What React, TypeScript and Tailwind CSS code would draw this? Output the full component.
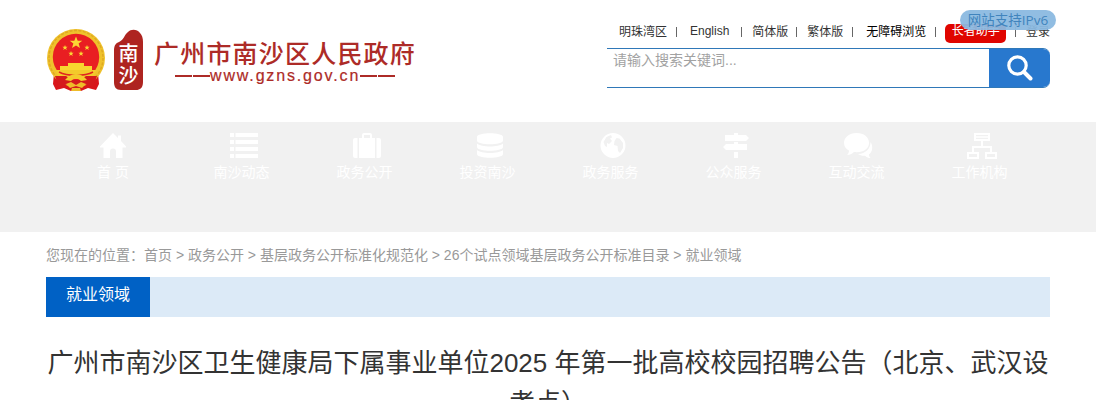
import type { ReactNode } from "react";

const icons: Record<string, ReactNode> = {
  home: (
    <path d="M0 14.500 13 1l5 5V3.500h3V9l5 5.500v1h-3.500V26H16v-6.500a3 3 0 0 0-6 0V26H3.500V15.500H0z" />
  ),
  list: (
    <path d="M0 1h4v4H0zM5.500 1H28v4H5.500zM0 8h4v4H0zM5.500 8H28v4H5.500zM0 15h4v4H0zM5.500 15H28v4H5.500zM0 22h4v4H0zM5.500 22H28v4H5.500z" />
  ),
  suitcase: (
    <path fillRule="evenodd" d="M0 8a2 2 0 0 1 2-2h2.500v20H2a2 2 0 0 1-2-2zM6 6h3V3a2 2 0 0 1 2-2h6a2 2 0 0 1 2 2v3h3v20H6zm5 0h6V3h-6zM23.500 6H26a2 2 0 0 1 2 2v16a2 2 0 0 1-2 2h-2.500z" />
  ),
  database: (
    <path d="M0 5c0-5 26-5 26 0v3.500c0 5-26 5-26 0zM0 11.500c4 4 22 4 26 0V15c0 5-26 5-26 0zM0 18c4 4 22 4 26 0v4c0 5-26 5-26 0z" />
  ),
  globe: (
    <path fillRule="evenodd" d="M13 1a12.500 12.500 0 1 0 0 25 12.500 12.500 0 0 0 0-25zM3.500 10l3-5 4.500-2 1 2.500-2 1 2 2.500-3 3-2-1v4l-2-1zM14.500 9l2-3 3 .5 3.500 4.500v5l-3 5-2-2-.5-5-3.500-1z" />
  ),
  signs: (
    <path d="M2 3h9V1h4v2h8l3 3-3 3H2zM3 12h8v-2h4v2h9v6H3l-3-3zM11 20h4v6h-4z" />
  ),
  comments: (
    <path d="M12.500 1C5 1 0 5.500 0 11c0 3.500 2 6 5 7.500 0 2-1 3.500-2 4.500 3 0 5-1 7-3 9 1 15-3 15-9S20 1 12.500 1zM26.500 10c0 7-5 11.500-12.500 12 2 1.500 5 2 7 1.700 1.500 1.500 3.500 2.300 5.500 2.300-1-1-1.500-2-1.500-3.500 4-3 4-9 1.500-12.500z" />
  ),
  sitemap: (
    <path fillRule="evenodd" d="M7 1h16v8h-7v5h9v6h5v7H18v-7h5v-4H7v4h5v7H0v-7h5v-6h9V9H7zM9 3v1.200h12V3zm0 2.800V7h12V5.800zM2 22v3h8v-3zm18 0v3h8v-3z" />
  ),
};

const nav = [
  { icon: "home", label: "首 页", size: 26, nudge: "pl-0" },
  { icon: "list", label: "南沙动态", size: 28, nudge: "pl-1" },
  { icon: "suitcase", label: "政务公开", size: 28, nudge: "pl-1" },
  { icon: "database", label: "投资南沙", size: 26, nudge: "pl-1" },
  { icon: "globe", label: "政务服务", size: 26, nudge: "pl-1" },
  { icon: "signs", label: "公众服务", size: 26, nudge: "pl-1" },
  { icon: "comments", label: "互动交流", size: 29, nudge: "pl-1" },
  { icon: "sitemap", label: "工作机构", size: 30, nudge: "pl-1" },
];

function Emblem() {
  return (
    <svg width="60" height="64" viewBox="0 0 60 64" className="shrink-0">
      <path d="M8 44h44l1 11-3 6-8-2-7 3H25l-7-3-8 2-3-6z" fill="#d9161b" />
      <ellipse cx="30" cy="29" rx="29" ry="29" fill="#efc22c" />
      <ellipse cx="30" cy="29" rx="27" ry="27.500" fill="none" stroke="#dfa922" strokeWidth="1.500" strokeDasharray="3 1.500" />
      <circle cx="30" cy="28" r="23.200" fill="#e91e22" />
      <path d="m30 7.500 1.700 4.200h4.600l-3.700 2.900 1.400 4.500-4-2.700-4 2.700 1.400-4.500-3.700-2.900h4.600z" fill="#fbd834" />
      <path d="m19 16 .7 1.800h1.900L20.100 19l.6 1.900-1.700-1.100-1.700 1.100.6-1.900-1.500-1.200h1.900zM41 16l.7 1.800h1.900L42.100 19l.6 1.900-1.700-1.100-1.700 1.100.6-1.900-1.500-1.200h1.900zM25 22l.7 1.800h1.900L26.100 25l.6 1.900-1.700-1.100-1.700 1.100.6-1.900-1.500-1.200h1.900zM35 22l.7 1.800h1.900L36.100 25l.6 1.900-1.700-1.100-1.700 1.100.6-1.900-1.500-1.200h1.900z" fill="#fbd834" />
      <path d="M22 34h16v3h8v4H14v-4h8z" fill="#f8d62f" />
      <path d="M9 41h42l-5 9H14z" fill="#f3ca2b" />
      <path d="M13 43c8 4.500 26 4.500 34 0" fill="none" stroke="#e02420" strokeWidth="1.500" />
      <path d="M9 47h11l6 4h8l6-4h11l-4 11-9-3-5 4h-6l-5-4-9 3z" fill="#d51a1c" />
      <path d="M19 51c3-4 7-6 11-6s8 2 11 6l-6 1c-3-3-7-3-10 0z" fill="#f4ca2b" />
      <path d="M20 55l5-2 5 3 5-3 5 2-4 4-6-2-6 2zM26 59h8l1 3H25z" fill="#eebc2a" />
    </svg>
  );
}

function Seal() {
  return (
    <svg width="30" height="62" viewBox="0 0 30 62" className="ml-2 shrink-0">
      <path d="M0 22c0-6 2-8 5-9 5-2 5-7 9-10 3-3 9-3 12 1 2 2 3 5 3 9v40c0 6-3 8-7 8H7c-5 0-7-3-7-8z" fill="#ae2420" />
      <g fill="#fff" fontFamily="Noto Sans CJK SC, sans-serif" fontSize="20" fontWeight="500" textAnchor="middle">
        <text x="14.500" y="32">南</text>
        <text x="14.500" y="54">沙</text>
      </g>
    </svg>
  );
}

function Divider({ className }: { className: string }) {
  return <span className={`h-2.5 w-px bg-[#666] ${className}`} />;
}

function Dashes() {
  return (
    <span className="flex gap-[1px]">
      <i className="h-[2px] w-[17px] bg-[#ad2b27]" />
      <i className="h-[2px] w-[17px] bg-[#ad2b27]" />
    </span>
  );
}

export default function App() {
  return (
    <div className="h-[400px] w-[1096px] overflow-hidden bg-white font-['Liberation_Sans','Noto_Sans_CJK_SC',sans-serif] text-[#333]">
      <header className="flex h-[122px] justify-between pr-[46px] pl-[46px]">
        <div className="flex pt-[29px]">
          <Emblem />
          <Seal />
          <div className="ml-[10px] flex flex-col whitespace-nowrap text-[#ad2b27]">
            <div className="mt-[8px] h-[34px] text-[25px] leading-[34px] font-medium tracking-[1.2px]">广州市南沙区人民政府</div>
            <div className="-mt-[5px] ml-[21px] flex h-[20px] items-center text-[16px] leading-5 tracking-[1.85px] [-webkit-text-stroke:0.2px_#ad2b27]">
              <Dashes />
              <span>www.gzns.gov.cn</span>
              <Dashes />
            </div>
          </div>
        </div>
        <div className="relative w-[443px] pt-[15px]">
          <div className="flex h-[33px] items-center pl-3 text-[12px] leading-[18px] whitespace-nowrap">
            <span className="w-12">明珠湾区</span>
            <Divider className="ml-[9px] mr-[13px]" />
            <span className="-mt-px w-10">English</span>
            <Divider className="mr-[10px] ml-[12px]" />
            <span className="w-9">简体版</span>
            <Divider className="mr-[10px] ml-[8px]" />
            <span className="w-9">繁体版</span>
            <Divider className="mr-[13px] ml-[9px]" />
            <span className="w-[60px] text-black">无障碍浏览</span>
            <Divider className="mr-[9px] ml-[9px]" />
            <span className="mt-1 flex h-[19px] w-[62px] items-start justify-center rounded-[5px] bg-[#e00500] leading-[15px] text-white">长者助手</span>
            <Divider className="mr-[10px] ml-[9px]" />
            <span>登录</span>
          </div>
          <div className="absolute top-[10px] left-[353px] flex h-5 w-24 items-center justify-center rounded-full bg-[#8bb9e0]/95 leading-5 whitespace-nowrap text-[#4084bd]">
            <span className="font-['Open_Sans','Noto_Sans_CJK_SC',sans-serif] text-[13.500px]">网站支持IPv6</span>
          </div>
          <div className="flex h-10 overflow-hidden rounded-r-[7px] border-t border-b border-solid border-[#2f78b8]">
            <div className="flex-1 pl-1.5 text-[14px] leading-[23px] text-[#a2a2a2]">请输入搜索关键词...</div>
            <div className="-my-px flex w-[61px] items-center justify-center bg-[#2878ce]">
              <svg width="26" height="26" viewBox="0 0 26 26" fill="none" stroke="#fff">
                <circle cx="10.500" cy="10.500" r="8.700" strokeWidth="3.200" />
                <path d="m17 17 6.500 6.500" strokeWidth="4" strokeLinecap="round" />
              </svg>
            </div>
          </div>
        </div>
      </header>

      <nav className="flex h-[110px] bg-[#f1f1f1] pl-[46px] text-[14px] text-white">
        {nav.map(({ icon, label, size, nudge }, i) => (
          <a key={icon} className={`flex flex-col items-center pt-[10px] ${i === 0 ? "w-[134px]" : "w-[123px]"}`}>
            <span className={nudge}>
              <svg width={size} height="27" viewBox={`0 0 ${size} 27`} fill="currentColor">
                {icons[icon]}
              </svg>
            </span>
            <span className="mt-[3px] leading-5">{label}</span>
          </a>
        ))}
      </nav>

      <main className="px-[46px]">
        <div className="h-[45px] text-[14px] leading-[46px] whitespace-nowrap text-[#999]">
          您现在的位置：首页 &gt; 政务公开 &gt; 基层政务公开标准化规范化 &gt; 26个试点领域基层政务公开标准目录 &gt; 就业领域
        </div>
        <div className="flex h-10 bg-[#dceaf7]">
          <h2 className="w-[104px] bg-[#0061c5] text-center text-[16px] leading-[36px] text-white">就业领域</h2>
        </div>
        <h1 className="mt-[26px] text-center text-[26px] leading-[40px] whitespace-nowrap text-[#333]">
          广州市南沙区卫生健康局下属事业单位2025 年第一批高校校园招聘公告（北京、武汉设
          <br />
          考点）
        </h1>
      </main>
    </div>
  );
}
